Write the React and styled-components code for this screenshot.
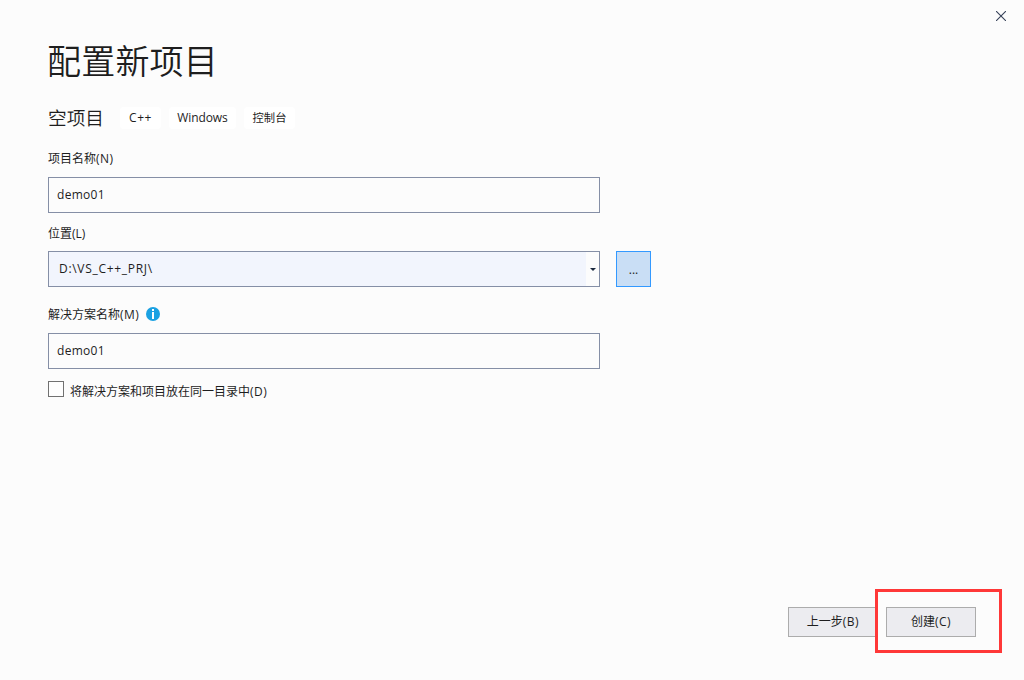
import styled, { createGlobalStyle } from "styled-components";

const GlobalStyle = createGlobalStyle`
  * {
    box-sizing: border-box;
  }

  body {
    margin: 0;
    background-color: #fcfcfc;
    color: #1e1e1e;
    font-family: "Open Sans", "Noto Sans CJK SC", sans-serif;
    font-size: 12px;
  }

  button,
  input {
    font: inherit;
    color: inherit;
  }
`;

// ==========Window==================
const Window = styled.div`
  width: 1024px;
  height: 680px;
  display: flex;
  flex-direction: column;
  overflow: hidden;
  background-color: #fcfcfc;
`;

const TitleBar = styled.header`
  height: 32px;
  display: flex;
  justify-content: flex-end;
`;

const CloseButton = styled.button`
  width: 46px;
  height: 32px;
  padding: 0;
  border: none;
  background: none;
  display: flex;
  align-items: center;
  justify-content: center;
`;

const Content = styled.main`
  flex: 1;
  padding: 4px 48px 0;
`;

const Title = styled.h1`
  margin: 0 0 0 -1px;
  height: 50px;
  font-size: 34px;
  line-height: 50px;
  font-weight: 350;
  letter-spacing: 0.2px;
`;

// ==========Template==================
const Template = styled.div`
  margin-top: 21px;
  height: 22px;
  display: flex;
  align-items: center;
  gap: 8px;
`;

const TemplateName = styled.h2`
  width: 64px;
  margin: 0;
  font-size: 18.67px;
  line-height: 22px;
  font-weight: 350;
  white-space: nowrap;
`;

const Tag = styled.span`
  width: ${(props) => props.$width}px;
  height: 22px;
  border-radius: 4px;
  background-color: #ffffff;
  line-height: 22px;
  text-align: center;
  font-size: ${(props) => props.$size || 12}px;
  letter-spacing: ${(props) => props.$spacing || 0}px;
`;

// ==========Form==================
const Field = styled.div`
  margin-top: ${(props) => props.$top}px;
`;

const Label = styled.label`
  height: 18px;
  margin-bottom: ${(props) => props.$bottom}px;
  display: flex;
  align-items: center;
  line-height: 18px;
  white-space: nowrap;

  svg {
    margin: -2px 0 0 7px;
  }
`;

// access key shown after a caption
const AccessKey = styled.span`
  letter-spacing: 0.5px;
`;

const TextInput = styled.input`
  display: block;
  width: 552px;
  height: 36px;
  padding: 0 8px 2px;
  border: 1px solid #858fa6;
  border-radius: 0;
  outline: none;
  background-color: #fcfcfc;
  letter-spacing: 0.3px;
`;

const Row = styled.div`
  display: flex;
  gap: 16px;
`;

const Combo = styled.div`
  width: 552px;
  height: 36px;
  display: flex;
  border: 1px solid #858fa6;
  background-color: #fcfcfc;
`;

const ComboValue = styled.div`
  flex: 1;
  padding-left: 10px;
  background-color: #f2f5fd;
  line-height: 34px;
  letter-spacing: 0.7px;
`;

const ComboArrow = styled.div`
  width: 13px;
  display: flex;
  align-items: center;
  justify-content: center;
`;

const BrowseButton = styled.button`
  width: 35px;
  height: 36px;
  padding: 0;
  border: 1px solid #3399ff;
  background-color: #c9def5;
`;

const CheckRow = styled.label`
  margin-top: 12px;
  height: 18px;
  display: flex;
  align-items: flex-start;
  gap: 6px;
  white-space: nowrap;
`;

const CheckBox = styled.input`
  appearance: none;
  width: 16px;
  height: 16px;
  margin: 0;
  border: 1px solid #717171;
  background-color: #fefefe;
`;

const CheckText = styled.span`
  padding-top: 2px;
  line-height: 18px;
`;

// ==========Footer==================
const Footer = styled.footer`
  position: relative;
  height: 73px;
  padding-right: 48px;
  display: flex;
  justify-content: flex-end;
  gap: 8px;
`;

const Button = styled.button`
  width: 90px;
  height: 30px;
  padding: 0 0 2px;
  border: 1px solid #acacac;
  background-color: #ececf0;
`;

const Highlight = styled.div`
  position: absolute;
  top: -18px;
  right: 22px;
  width: 127px;
  height: 64px;
  border: 3px solid #ff3838;
  pointer-events: none;
`;

// ===============component======================

const tags = [
  { name: "C++", width: 41, spacing: 0.5 },
  { name: "Windows", width: 67, spacing: -0.1 },
  { name: "控制台", width: 51, size: 11.3 },
];

const CloseIcon = () => (
  <svg width="10" height="10" viewBox="0 0 10 10">
    <path d="M0 0 10 10M10 0 0 10" stroke="#374259" strokeWidth="1.1" />
  </svg>
);

const InfoIcon = () => (
  <svg width="14" height="14" viewBox="0 0 14 14">
    <circle cx="7" cy="7" r="7" fill="#1ba1e2" />
    <path d="M6 2h2v2H6zM6 5h2v7H6z" fill="#ffffff" />
  </svg>
);

const ArrowIcon = () => (
  <svg width="6" height="3" viewBox="0 0 6 3">
    <path d="M0 0h6L3 3z" fill="#1b293e" />
  </svg>
);

const App = () => {
  return (
    <Window>
      <GlobalStyle />
      <TitleBar>
        <CloseButton aria-label="关闭">
          <CloseIcon />
        </CloseButton>
      </TitleBar>
      <Content>
        <Title>配置新项目</Title>
        <Template>
          <TemplateName>空项目</TemplateName>
          {tags.map((tag) => (
            <Tag
              key={tag.name}
              $width={tag.width}
              $size={tag.size}
              $spacing={tag.spacing}
            >
              {tag.name}
            </Tag>
          ))}
        </Template>
        <Field $top={21}>
          <Label $bottom={9}>
            项目名称<AccessKey>(N)</AccessKey>
          </Label>
          <TextInput defaultValue="demo01" />
        </Field>
        <Field $top={12}>
          <Label $bottom={8}>位置(L)</Label>
          <Row>
            <Combo>
              <ComboValue>D:\VS_C++_PRJ\</ComboValue>
              <ComboArrow>
                <ArrowIcon />
              </ComboArrow>
            </Combo>
            <BrowseButton>...</BrowseButton>
          </Row>
        </Field>
        <Field $top={19}>
          <Label $bottom={9}>
            解决方案名称<AccessKey>(M)</AccessKey>
            <InfoIcon />
          </Label>
          <TextInput defaultValue="demo01" />
        </Field>
        <CheckRow>
          <CheckBox type="checkbox" />
          <CheckText>
            将解决方案和项目放在同一目录中<AccessKey>(D)</AccessKey>
          </CheckText>
        </CheckRow>
      </Content>
      <Footer>
        <Button>
          上一步<AccessKey>(B)</AccessKey>
        </Button>
        <Button>
          创建<AccessKey>(C)</AccessKey>
        </Button>
        <Highlight />
      </Footer>
    </Window>
  );
};

export default App;
